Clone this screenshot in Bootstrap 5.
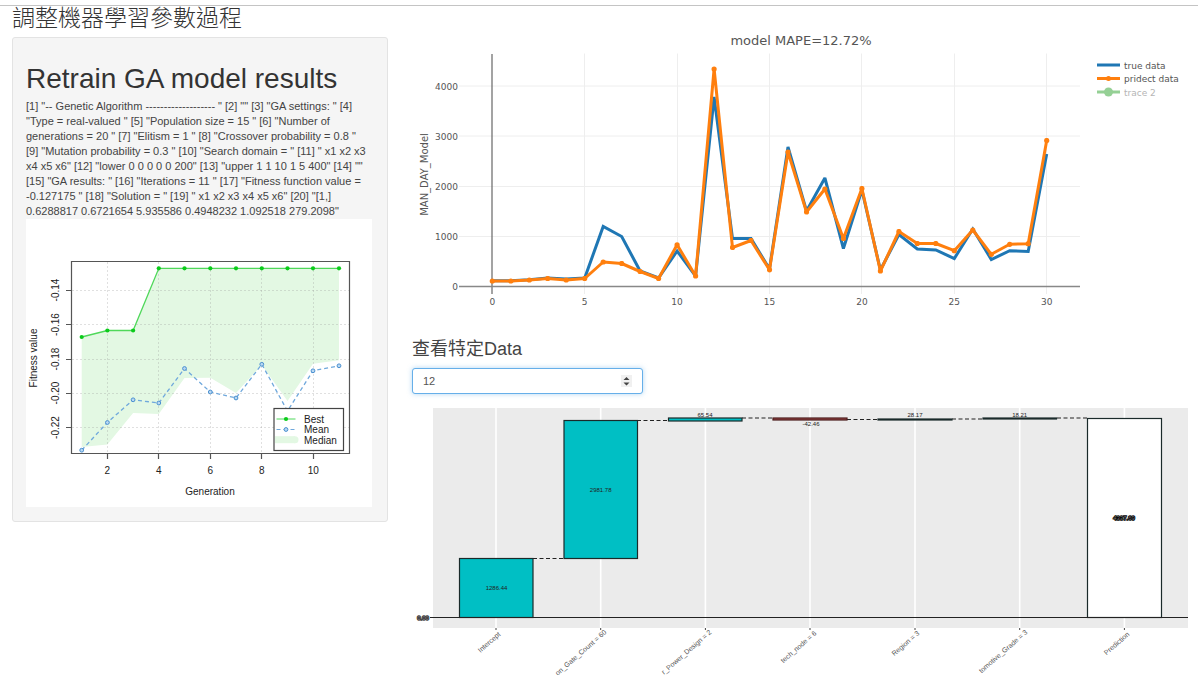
<!DOCTYPE html>
<html lang="zh-Hant">
<head>
<meta charset="utf-8">
<meta name="viewport" content="width=device-width, initial-scale=1">
<title>調整機器學習參數過程</title>
<link href="https://cdn.jsdelivr.net/npm/bootstrap@5.3.0/dist/css/bootstrap.min.css" rel="stylesheet">
<style>
  body { font-family: "Liberation Sans", "Noto Sans CJK TC", sans-serif; color: #333; background: #fff; font-size: 11px; line-height: 15px; }
  .top-rule { height: 6px; border-bottom: 1px solid #c4c4c4; }
  .page-body { padding: 0 10px 0 12px; }
  .page-title { font-size: 23px; line-height: 25px; font-weight: 300; color: #333; margin-bottom: 6px; }
  .well-panel { background: #f5f5f5; border: 1px solid #e3e3e3; border-radius: 3px; padding: 25px 15px 14px 13px; }
  .well-panel h2 { font-size: 28px; line-height: 32px; font-weight: 400; margin-bottom: 4px; }
  .ga-output { margin: 0; padding-right: 4px; color: #444; }
  .section-title { font-size: 18px; line-height: 22px; font-weight: 400; color: #444; margin: 0 0 8px; }
  .row-picker { width: 231px; height: 26px; font-size: 11px; line-height: 15px; padding: 0 10px; border-color: #66afe9; border-radius: 3px; color: #555; box-shadow: 0 0 5px rgba(102,175,233,.5); }
  .row-picker::-webkit-inner-spin-button {
    -webkit-appearance: none; opacity: 1; width: 11px; height: 12px;
    background: #f0f0f0 url("data:image/svg+xml,%3Csvg xmlns='http://www.w3.org/2000/svg' viewBox='0 0 11 12'%3E%3Cpath d='M2.5 5L5.5 2 8.5 5ZM2.5 7.5H8.5L5.5 10.5Z' fill='%23444'/%3E%3C/svg%3E") 0 0 / 11px 12px no-repeat;
  }
  svg.plot { display: block; width: 100%; height: auto; }
  .plotly { font-family: "DejaVu Sans", sans-serif; fill: #555; }
</style>
</head>
<body>
<div class="top-rule"></div>
<main class="container-fluid page-body">
  <div class="row gx-4">
    <div class="col-4">
      <h1 class="page-title text-nowrap">調整機器學習參數過程</h1>
      <section class="well-panel">
        <h2 class="text-nowrap">Retrain GA model results</h2>
        <p class="ga-output">[1] "-- Genetic Algorithm ------------------- " [2] "" [3] "GA settings: " [4] "Type = real-valued " [5] "Population size = 15 " [6] "Number of generations = 20 " [7] "Elitism = 1 " [8] "Crossover probability = 0.8 " [9] "Mutation probability = 0.3 " [10] "Search domain = " [11] " x1 x2 x3 x4 x5 x6" [12] "lower 0 0 0 0 0 200" [13] "upper 1 1 10 1 5 400" [14] "" [15] "GA results: " [16] "Iterations = 11 " [17] "Fitness function value = -0.127175 " [18] "Solution = " [19] " x1 x2 x3 x4 x5 x6" [20] "[1,] 0.6288817 0.6721654 5.935586 0.4948232 1.092518 279.2098"</p>
        <svg class="plot" viewBox="26 219 346 288" role="img" aria-label="Fitness value by generation" font-family="Liberation Sans, sans-serif" font-size="10" fill="#222">
          <defs>
            <marker id="bestDot" markerUnits="userSpaceOnUse" markerWidth="6" markerHeight="6" refX="3" refY="3"><circle cx="3" cy="3" r="2.1" fill="#0bcb1b"/></marker>
            <marker id="meanDot" markerUnits="userSpaceOnUse" markerWidth="6" markerHeight="6" refX="3" refY="3"><circle cx="3" cy="3" r="1.9" fill="#b9d8f2" stroke="#4a90d0"/></marker>
          </defs>
          <rect x="26" y="219" width="346" height="288" fill="#fff"/>
          <path d="M81.7 337 107.4 330.5 133.1 330.5 158.8 268.3H339V360.3L313 363.7 287.5 401 261.8 365 236 393 210.3 377.7 184.5 378 158.8 414 133.1 413 107.4 444.5 81.7 447Z" fill="#e3f8e3"/>
          <path d="M107.5 262V453M158.5 262V453M210.5 262V453M261.5 262V453M313.5 262V453M72 290.5H349M72 324.5H349M72 359.5H349M72 393.5H349M72 427.5H349" stroke="#999" stroke-opacity=".3" stroke-dasharray="2 2" fill="none"/>
          <polyline points="81.7,337 107.4,330.5 133.1,330.5 158.8,268.3 184.5,268.3 210.3,268.3 236,268.3 261.8,268.3 287.5,268.3 313,268.3 339,268.3" fill="none" stroke="#4fd85a" stroke-width="1.3" marker-start="url(#bestDot)" marker-mid="url(#bestDot)" marker-end="url(#bestDot)"/>
          <polyline points="81.7,450.2 107.4,422.5 133.1,399.8 158.8,403 184.5,368.5 210.3,392 236,398 261.8,364.3 287.5,411 313,370.8 339,365.8" fill="none" stroke="#6fa8dc" stroke-width="1.3" stroke-dasharray="4 3" marker-start="url(#meanDot)" marker-mid="url(#meanDot)" marker-end="url(#meanDot)"/>
          <path d="M71.5 261.5H349.5V453.5H71.5ZM66 290.5H71M66 324.5H71M66 359.5H71M66 393.5H71M66 427.5H71M107.5 454V459M158.5 454V459M210.5 454V459M261.5 454V459M313.5 454V459" fill="none" stroke="#555" stroke-width="1.2"/>
          <g text-anchor="middle">
            <text x="107.4" y="474">2</text><text x="158.8" y="474">4</text><text x="210.3" y="474">6</text><text x="261.8" y="474">8</text><text x="313.3" y="474">10</text>
            <text x="210" y="495">Generation</text>
            <text transform="translate(59 290) rotate(-90)">-0.14</text><text transform="translate(59 324.5) rotate(-90)">-0.16</text><text transform="translate(59 359) rotate(-90)">-0.18</text><text transform="translate(59 393) rotate(-90)">-0.20</text><text transform="translate(59 427.5) rotate(-90)">-0.22</text>
            <text transform="translate(37 358) rotate(-90)">Fitness value</text>
          </g>
          <rect x="274" y="408.5" width="69.5" height="42" fill="#fff" stroke="#444" stroke-width="1.2"/>
          <path d="M276.5 419H295.5" stroke="#4fd85a"/><circle cx="286" cy="419" r="2.1" fill="#0bcb1b"/>
          <path d="M276.5 429.5H295.5" stroke="#6fa8dc" stroke-dasharray="4 3"/><circle cx="286" cy="429.5" r="1.9" fill="#b9d8f2" stroke="#4a90d0"/>
          <path d="M275 439.7H295" stroke="#e3f8e3" stroke-width="7"/><circle cx="295" cy="439.7" r="3.5" fill="#e3f8e3"/>
          <text x="304" y="422.5">Best</text><text x="304" y="433">Mean</text><text x="304" y="443.5">Median</text>
        </svg>
      </section>
    </div>
    <div class="col-8">
      <svg class="plot plotly" viewBox="412 6 776 332" role="img" aria-label="model MAPE=12.72%" font-size="9">
        <defs><marker id="predDot" markerUnits="userSpaceOnUse" markerWidth="6" markerHeight="6" refX="3" refY="3"><circle cx="3" cy="3" r="2.6" fill="#ff7f0e"/></marker></defs>
        <text x="801" y="45" font-size="13" text-anchor="middle">model MAPE=12.72%</text>
        <path d="M584.5 53.5V294M677.5 53.5V294M769.5 53.5V294M861.5 53.5V294M954.5 53.5V294M1046.5 53.5V294M459 86H1080M459 136H1080M459 186.5H1080M459 236.5H1080" stroke="#eee" fill="none"/>
        <path d="M492 54V294" stroke="#666" stroke-opacity=".6" stroke-width="2"/><path d="M459 286.5H1080" stroke="#888" stroke-width="1.5"/>
        <polyline fill="none" stroke="#1f77b4" stroke-width="3" stroke-linejoin="miter" stroke-miterlimit="2" points="492.3,280.7 510.8,280.7 529.3,279.7 547.7,278 566.2,279 584.7,278 603.2,226.5 621.7,236.5 640.1,271 658.6,278 677.1,251 695.6,276 714.1,97 732.5,238.5 751,238.5 769.5,269 788,147 806.5,211 824.9,178 843.4,248.5 861.9,190 880.4,270 898.9,234.5 917.3,249 935.8,250 954.3,258.5 972.8,229 991.3,259.5 1009.7,250.7 1028.2,251.5 1046.7,154"/>
        <polyline fill="none" stroke="#ff7f0e" stroke-width="3" stroke-linejoin="round" marker-start="url(#predDot)" marker-mid="url(#predDot)" marker-end="url(#predDot)" points="492.3,281 510.8,281 529.3,280 547.7,278.5 566.2,280 584.7,278.5 603.2,262 621.7,263.5 640.1,271.5 658.6,278.5 677.1,244.8 695.6,276 714.1,69 732.5,247.5 751,240.5 769.5,269.8 788,152 806.5,212 824.9,189 843.4,238.5 861.9,188.5 880.4,271 898.9,231.5 917.3,243.5 935.8,243.5 954.3,250.7 972.8,230 991.3,254.3 1009.7,244.3 1028.2,243.7 1046.7,140.5"/>
        <g text-anchor="end"><text x="458" y="89.5">4000</text><text x="458" y="139.5">3000</text><text x="458" y="190">2000</text><text x="458" y="240">1000</text><text x="458" y="290">0</text></g>
        <g text-anchor="middle"><text x="492.3" y="305">0</text><text x="584.7" y="305">5</text><text x="677.1" y="305">10</text><text x="769.5" y="305">15</text><text x="861.9" y="305">20</text><text x="954.3" y="305">25</text><text x="1046.7" y="305">30</text>
        <text transform="translate(428 174.5) rotate(-90)" font-size="10">MAN_DAY_Model</text></g>
        <path d="M1097 65H1120" stroke="#1f77b4" stroke-width="3"/>
        <path d="M1097 78.5H1120" stroke="#ff7f0e" stroke-width="3"/><circle cx="1108.5" cy="78.5" r="2.5" fill="#ff7f0e"/>
        <path d="M1097 92H1120" stroke="#95d095" stroke-width="3"/><circle cx="1108.5" cy="92" r="4.5" fill="#95d095"/>
        <text x="1124" y="68.5">true data</text><text x="1124" y="82">pridect data</text><text x="1124" y="95.5" fill="#b5b5b5">trace 2</text>
      </svg>
      <label for="dataRow" class="section-title d-block">查看特定Data</label>
      <input id="dataRow" type="number" value="12" class="form-control row-picker">
      <svg class="plot" viewBox="412 394 776 281" role="img" aria-label="Prediction contributions" font-family="Liberation Sans, sans-serif" font-size="6" fill="#222">
        <rect x="433" y="408" width="755" height="220" fill="#ebebeb"/>
        <path d="M496 408V628M600.7 408V628M705.4 408V628M810 408V628M915 408V628M1019.7 408V628M1124.4 408V628" stroke="#fff" stroke-width="1.6"/>
        <path d="M533 558.5H564M637 420.5H668M742 418H773M847 419.5H878M952 419H983M1057 418H1087" stroke="#222" stroke-width="1.2" stroke-dasharray="4 2.5"/>
        <g stroke="#1a2a2a" stroke-width="1.2">
          <rect x="459.5" y="558.5" width="73.5" height="59" fill="#00bfc4"/>
          <rect x="564" y="420.5" width="73.5" height="138" fill="#00bfc4"/>
          <rect x="668.5" y="418" width="73.5" height="3" fill="#00bfc4"/>
          <rect x="773" y="418" width="74" height="2" fill="#a04a4a" stroke="#4a1c1c"/>
          <rect x="878" y="419" width="74" height="1" fill="#111"/>
          <rect x="983" y="418" width="73.5" height="1" fill="#111"/>
          <rect x="1087.5" y="418.5" width="74" height="199" fill="#fff"/>
        </g>
        <path d="M430 617.5H1188" stroke="#222" stroke-width="1.2"/>
        <path d="M496 628V630M600.7 628V630M705.4 628V630M810 628V630M915 628V630M1019.7 628V630M1124.4 628V630" stroke="#444"/>
        <g text-anchor="middle">
          <text x="496.5" y="590">1286.44</text><text x="600.7" y="492">2981.78</text>
          <text x="705" y="417">65.54</text><text x="811" y="425.5">-42.46</text><text x="915" y="417">28.17</text><text x="1019.7" y="417">18.21</text>
          <text x="1124" y="520" stroke="#000" stroke-width="1.5" paint-order="stroke" fill="#777">4337.69</text>
          <text x="423" y="620" stroke="#333" stroke-width="1.5" paint-order="stroke" fill="#888">0.00</text>
        </g>
        <g text-anchor="end" font-size="7" fill="#555">
          <text transform="translate(501 635) rotate(-41)">Intercept</text>
          <text transform="translate(607 633) rotate(-41)">on_Gate_Count = 60</text>
          <text transform="translate(712 633) rotate(-41)">r_Power_Design = 2</text>
          <text transform="translate(817 634) rotate(-41)">tech_node = 6</text>
          <text transform="translate(920 634) rotate(-41)">Region = 3</text>
          <text transform="translate(1028 633) rotate(-41)">tomotive_Grade = 3</text>
          <text transform="translate(1130 635) rotate(-41)">Prediction</text>
        </g>
      </svg>
    </div>
  </div>
</main>
<script src="https://cdn.jsdelivr.net/npm/bootstrap@5.3.0/dist/js/bootstrap.bundle.min.js"></script>
</body>
</html>
